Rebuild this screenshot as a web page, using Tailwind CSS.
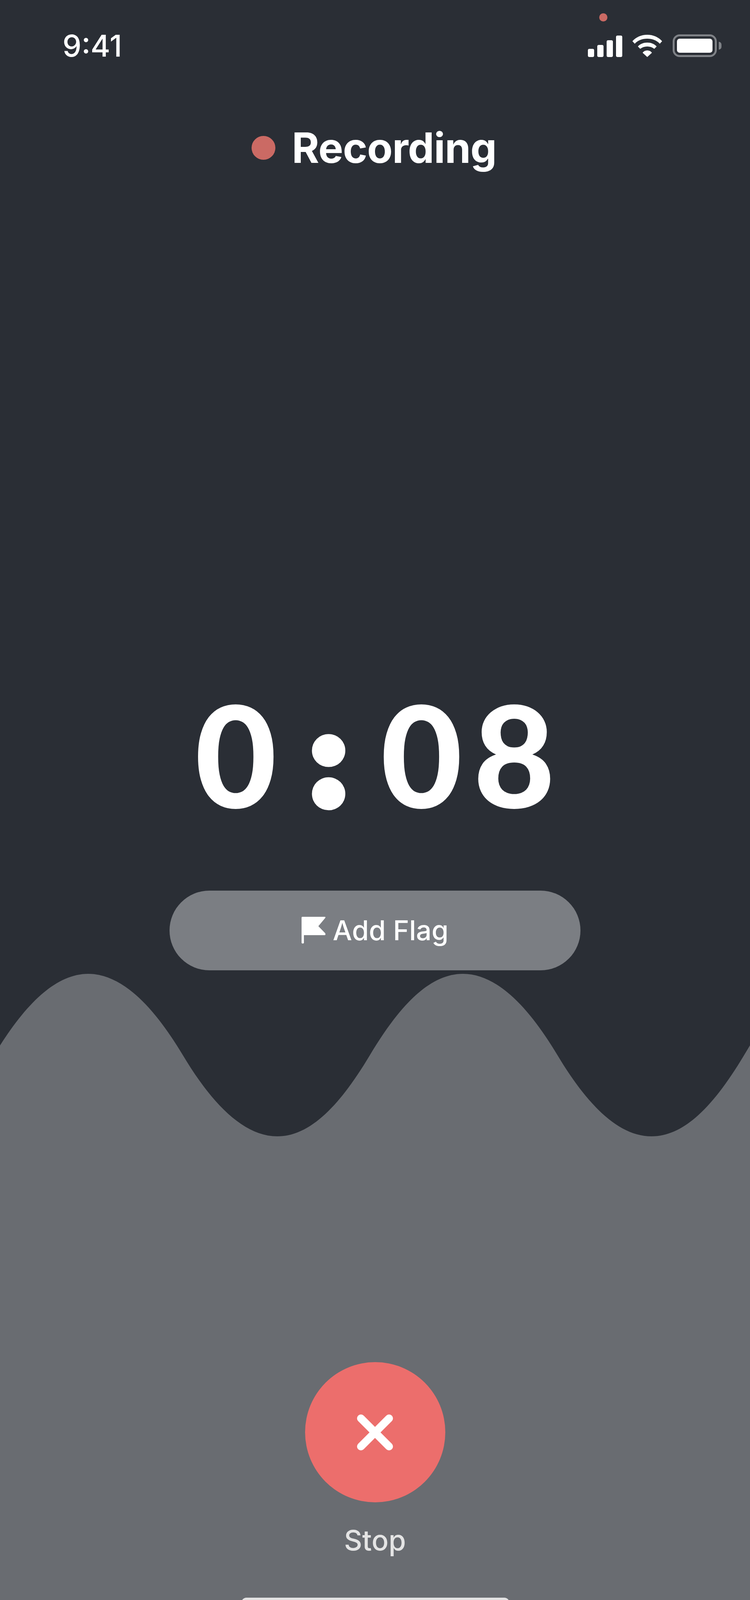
<!DOCTYPE html>
<html lang="en">
  <head>
    <meta charset="UTF-8">
    <title>Recording</title>
    <script src="https://cdn.jsdelivr.net/npm/@tailwindcss/browser@4"></script>
  </head>
  <body class="bg-[#2a2e35]">
    <main class="relative flex flex-col items-center w-[1920px] h-[4157px] overflow-hidden bg-[#2a2e35] text-white font-['Inter',sans-serif]">

      <!-- wave behind everything -->
      <svg class="absolute left-0 top-0" width="1920" height="4157" viewBox="0 0 1920 4157">
        <path fill="#696c71" d="M-15 2701C55 2584 136 2493 226 2493C316 2493 398 2584 468 2701C538 2818 620 2909 710 2909C800 2909 877 2818 947 2701C1017 2584 1095 2493 1185 2493C1275 2493 1357 2584 1427 2701C1497 2818 1578 2909 1668 2909C1758 2909 1835 2818 1905 2701L1950 2626V4157H-15Z"/>
      </svg>

      <!-- camera-in-use dot -->
      <span class="absolute left-[1534px] top-[34px] w-[21px] h-[21px] rounded-full bg-[#cb6a64]"></span>

      <!-- status bar -->
      <header class="relative flex justify-between items-center w-full h-[58px] mt-[88px] pl-[160px] pr-[73px]">
        <span class="text-[77px] leading-none font-medium">9:41</span>
        <div class="flex items-end">
          <div class="flex items-end gap-[8px] mr-[25px]">
            <span class="w-[16px] h-[21px] rounded-[4px] bg-white"></span>
            <span class="w-[16px] h-[31px] rounded-[4px] bg-white"></span>
            <span class="w-[16px] h-[43px] rounded-[4px] bg-white"></span>
            <span class="w-[16px] h-[55px] rounded-[4px] bg-white"></span>
          </div>
          <svg class="mr-[26px]" width="78" height="57" viewBox="0 0 78 57" fill="#fff">
            <path d="M1 16.5C10 6 24 0 39 0C54 0 68 6 77 16.5L71 23C63 14 52 10 39 10C26 10 15 14 7 23Z"/>
            <path d="M15 30C21 23 30 20 39 20C48 20 57 23 63 30L57 36C52 32 46 30 39 30C32 30 26 32 21 36Z"/>
            <path d="M27 46C30 42 34 40 39 40C44 40 48 42 51 46L39 57Z"/>
          </svg>
          <div class="flex items-center">
            <div class="w-[113px] h-[58px] p-[6px] border-[5px] border-[#7f8287] rounded-[18px]">
              <div class="w-full h-full rounded-[7px] bg-white"></div>
            </div>
            <span class="w-[7px] h-[20px] ml-[5px] rounded-r-full bg-[#7f8287]"></span>
          </div>
        </div>
      </header>

      <!-- title -->
      <div class="relative flex items-center gap-[42px] mt-[172px] pr-[5px]">
        <span class="w-[61px] h-[61px] rounded-full bg-[#cb6a64]"></span>
        <h1 class="text-[107px] leading-[120px] font-bold tracking-[-1px]">Recording</h1>
      </div>

      <!-- timer -->
      <div class="relative flex items-center mt-[1297px] text-[361px] leading-[380px] font-black font-['Lato',sans-serif]">
        <span>0</span>
        <span class="flex justify-center w-[266px] mt-[8px] text-[316px] [-webkit-text-stroke:34px_white]">:</span>
        <span>0</span>
        <span class="ml-[28px]">8</span>
      </div>

      <!-- flag button -->
      <button class="relative flex justify-center items-center gap-[18px] w-[1052px] h-[204px] mt-[157px] rounded-full bg-[#7b7e83]">
        <svg width="62" height="70" viewBox="0 0 62 70" fill="#fff">
          <path d="M2 0H59Q62.5 0 60.5 3L43 24L60.5 42Q62.5 47 59 47H6V67Q3 70 0 67V2Q0 0 2 0Z"/>
        </svg>
        <span class="text-[70px] leading-none font-medium">Add Flag</span>
      </button>

      <!-- stop -->
      <button class="relative flex justify-center items-center w-[359px] h-[359px] mt-[1003px] rounded-full bg-[#ec6e6c]">
        <svg width="94" height="94" viewBox="0 0 94 94">
          <path d="M11 11L83 83M83 11L11 83" stroke="#fff" stroke-width="20" stroke-linecap="round"/>
        </svg>
      </button>
      <span class="relative mt-[52px] text-[72px] leading-[90px] font-medium text-[#e4e4e4]">Stop</span>

      <!-- home indicator -->
      <span class="absolute left-[618px] bottom-[41px] w-[686px] h-[26px] rounded-full bg-[#e3e3e3]"></span>
    </main>
  </body>
</html>
